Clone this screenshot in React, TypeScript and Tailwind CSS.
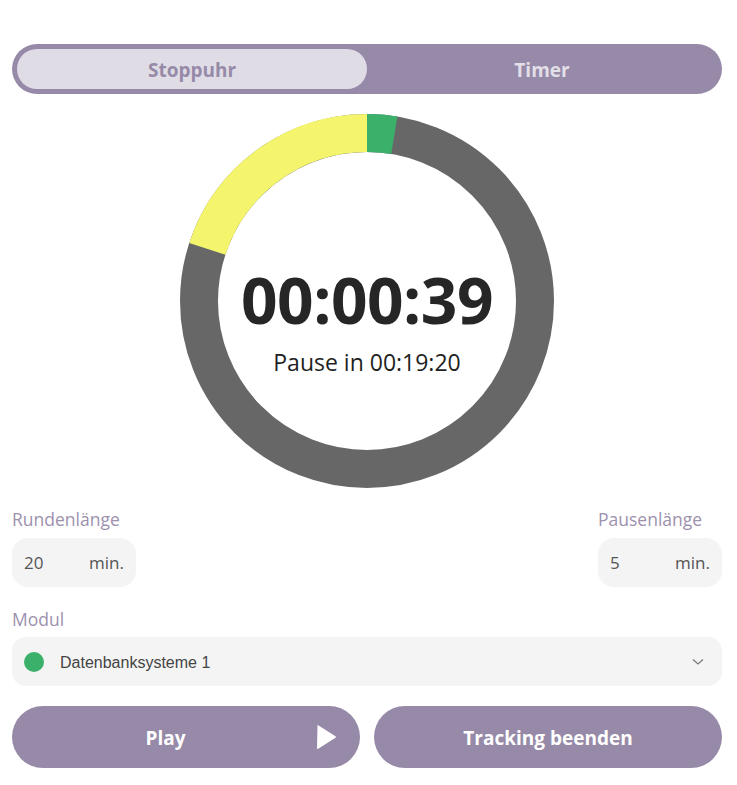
const ring = {
  size: 374,
  stroke: 38,
  totalSec: 25 * 60,
  elapsedSec: 39,
  pauseSec: 5 * 60,
}

function Ring() {
  const r = (ring.size - ring.stroke) / 2
  const c = 2 * Math.PI * r
  const green = (ring.elapsedSec / ring.totalSec) * c
  const yellow = (ring.pauseSec / ring.totalSec) * c
  const mid = ring.size / 2
  return (
    <svg width={ring.size} height={ring.size} viewBox={`0 0 ${ring.size} ${ring.size}`} className="absolute inset-0">
      <g transform={`rotate(-90 ${mid} ${mid})`}>
        <circle cx={mid} cy={mid} r={r} fill="none" stroke="#676767" strokeWidth={ring.stroke} />
        <circle cx={mid} cy={mid} r={r} fill="none" stroke="#3bb06b" strokeWidth={ring.stroke} strokeDasharray={`${green} ${c}`} />
        <circle
          cx={mid}
          cy={mid}
          r={r}
          fill="none"
          stroke="#f4f56c"
          strokeWidth={ring.stroke}
          strokeDasharray={`${yellow} ${c}`}
          strokeDashoffset={-(c - yellow)}
        />
      </g>
    </svg>
  )
}

function NumberField({ label, value }: { label: string; value: string }) {
  return (
    <div className="flex flex-col items-start">
      <span className="text-[17.5px] leading-6 text-[#9d91ae] mb-[7px]">{label}</span>
      <div className="w-[124px] h-[49px] rounded-2xl bg-[#f4f4f4] flex items-center justify-between px-3 text-[17px] text-[#555555]">
        <span>{value}</span>
        <span>min.</span>
      </div>
    </div>
  )
}

export default function App() {
  return (
    <div className="w-[737px] h-[785px] bg-white pl-3 pr-[15px] pt-[44px] font-['Open_Sans',sans-serif]">
      <div className="h-[50px] rounded-full bg-[#968aa8] p-[5px] grid grid-cols-2">
        <div className="rounded-full bg-[#dfdce6] flex items-center justify-center pt-[3px] text-[19px] font-bold text-[#968aa8]">
          Stoppuhr
        </div>
        <div className="flex items-center justify-center pt-[3px] text-[19px] font-bold text-[#e3dfe9]">Timer</div>
      </div>

      <div className="flex justify-center mt-5">
        <div className="relative w-[374px] h-[374px]">
          <Ring />
          <div className="absolute inset-0 flex flex-col items-center justify-center pt-[40px]">
            <span className="text-[64px] font-bold leading-none text-[#262626] tracking-[-0.5px]">00:00:39</span>
            <span className="text-[23px] text-[#1f1f1f] mt-[19px] leading-none">Pause in 00:19:20</span>
          </div>
        </div>
      </div>

      <div className="flex justify-between mt-[19px]">
        <NumberField label="Rundenlänge" value="20" />
        <NumberField label="Pausenlänge" value="5" />
      </div>

      <div className="mt-5 flex flex-col">
        <span className="text-[17.5px] leading-6 text-[#9d91ae] mb-[6px]">Modul</span>
        <div className="h-[49px] rounded-[14px] bg-[#f4f4f4] flex items-center pl-3 pr-4 font-['Liberation_Sans',sans-serif]">
          <span className="w-5 h-5 rounded-full bg-[#3bb06b]" />
          <span className="ml-4 pt-[2px] text-[16px] text-[#444444] flex-1">Datenbanksysteme 1</span>
          <svg width="12" height="8" viewBox="0 0 12 8" className="mr-[2px]">
            <path d="M1 1.5 L6 6 L11 1.5" fill="none" stroke="#777777" strokeWidth="1.2" />
          </svg>
        </div>
      </div>

      <div className="mt-5 grid grid-cols-2 gap-[14px]">
        <button className="h-[62px] rounded-full bg-[#968aa8] flex items-center pr-[23px] text-white text-[19px] font-bold">
          <span className="flex-1 text-center pl-[3px] pt-[3px]">Play</span>
          <svg width="21" height="26" viewBox="0 0 21 26">
            <path d="M1.5 1.5 Q1 0.5 2.2 1.3 L19.5 12.2 Q20.5 13 19.5 13.8 L2.2 24.7 Q1 25.5 1 24 Z" fill="white" />
          </svg>
        </button>
        <button className="h-[62px] rounded-full bg-[#968aa8] flex items-center justify-center pt-[3px] text-white text-[19px] font-bold">
          Tracking beenden
        </button>
      </div>
    </div>
  )
}
